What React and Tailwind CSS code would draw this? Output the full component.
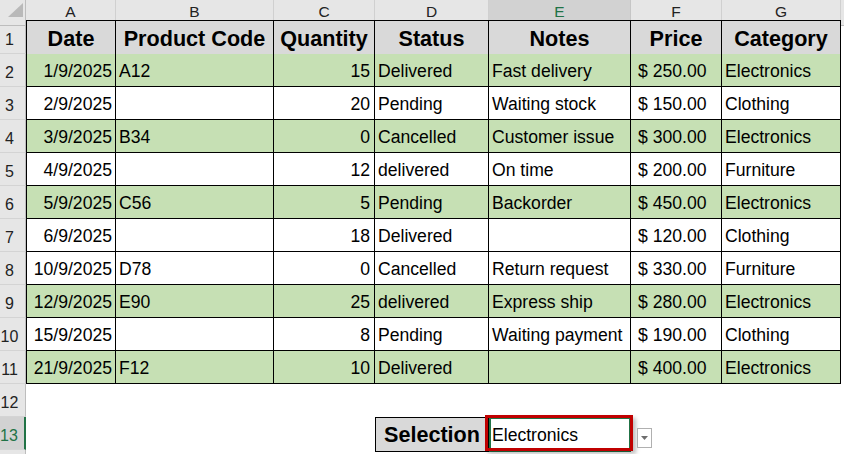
const FONT = "font-['Liberation_Sans',Arial,sans-serif]";
const COLS = 'grid grid-cols-[26px_90px_158px_101px_114px_142px_91px_119px_1fr]';

const letters = ['A', 'B', 'C', 'D', 'E', 'F', 'G'];
const headers = ['Date', 'Product Code', 'Quantity', 'Status', 'Notes', 'Price', 'Category'];

// date, code, qty, status, notes, price, category
const rows = [
  ['1/9/2025', 'A12', 15, 'Delivered', 'Fast delivery', '250.00', 'Electronics'],
  ['2/9/2025', '', 20, 'Pending', 'Waiting stock', '150.00', 'Clothing'],
  ['3/9/2025', 'B34', 0, 'Cancelled', 'Customer issue', '300.00', 'Electronics'],
  ['4/9/2025', '', 12, 'delivered', 'On time', '200.00', 'Furniture'],
  ['5/9/2025', 'C56', 5, 'Pending', 'Backorder', '450.00', 'Electronics'],
  ['6/9/2025', '', 18, 'Delivered', '', '120.00', 'Clothing'],
  ['10/9/2025', 'D78', 0, 'Cancelled', 'Return request', '330.00', 'Furniture'],
  ['12/9/2025', 'E90', 25, 'delivered', 'Express ship', '280.00', 'Electronics'],
  ['15/9/2025', '', 8, 'Pending', 'Waiting payment', '190.00', 'Clothing'],
  ['21/9/2025', 'F12', 10, 'Delivered', '', '400.00', 'Electronics'],
];

function RowHead({ n, selected, tall }) {
  return (
    <div
      className={`flex items-end justify-center pr-[6px] pb-[1px] text-[16px] border-b border-[#d4d4d4] ${
        tall ? 'h-[34px]' : 'h-[33px]'
      } ${
        selected
          ? 'bg-[#d2d2d2] text-[#217346] border-r-2 border-r-[#217346]'
          : 'bg-[#e6e6e6] text-[#222] border-r border-r-[#bdbdbd]'
      }`}
    >
      {n}
    </div>
  );
}

function ColumnHeader() {
  return (
    <div className={`${COLS} h-[20px] text-[15.5px] text-[#222]`}>
      <div className="relative bg-[#e6e6e6] border-r border-b border-[#bdbdbd]">
        <svg width="26" height="20" className="absolute inset-0">
          <polygon points="23,3 23,17 8,17" fill="#b9b9b9" />
        </svg>
      </div>
      {letters.map((l) =>
        l === 'E' ? (
          <div
            key={l}
            className="flex items-center justify-center pb-[1px] bg-[#d2d2d2] text-[#217346] border-r border-r-[#c6c6c6] border-b-2 border-b-[#217346]"
          >
            {l}
          </div>
        ) : (
          <div
            key={l}
            className="flex items-center justify-center pb-[2px] bg-[#e6e6e6] border-r border-r-[#d0d0d0] border-b border-b-[#bdbdbd]"
          >
            {l}
          </div>
        )
      )}
      <div className="bg-[#e6e6e6] border-b border-[#bdbdbd]" />
    </div>
  );
}

function HeaderRow() {
  return (
    <div className={`${COLS} h-[34px]`}>
      <RowHead n={1} tall />
      {headers.map((h, i) => (
        <div
          key={h}
          className={`flex items-center justify-center pt-[2px] bg-[#d9d9d9] border-t border-r border-b border-black text-[21.6px] font-bold text-black ${
            i === 0 ? 'border-l' : ''
          }`}
        >
          {h}
        </div>
      ))}
      <div />
    </div>
  );
}

function DataRow({ n, row }) {
  const [date, code, qty, status, notes, price, cat] = row;
  const bg = cat === 'Electronics' ? 'bg-[#c6e0b4]' : 'bg-white';
  const cell = `flex items-center pt-[2px] border-r border-b border-black whitespace-nowrap ${bg}`;
  return (
    <div className={`${COLS} h-[33px] text-[17.6px] text-black`}>
      <RowHead n={n} />
      <div className={`${cell} border-l justify-end pr-[3px]`}>{date}</div>
      <div className={`${cell} pl-[3px]`}>{code}</div>
      <div className={`${cell} justify-end pr-[4px]`}>{qty}</div>
      <div className={`${cell} pl-[3px]`}>{status}</div>
      <div className={`${cell} pl-[3px]`}>{notes}</div>
      <div className={`${cell} pl-[7px]`}>$ {price}</div>
      <div className={`${cell} pl-[3px]`}>{cat}</div>
      <div className="bg-white" />
    </div>
  );
}

function SelectionRow() {
  return (
    <div className={`${COLS} h-[33px]`}>
      <RowHead n={13} selected />
      <div />
      <div />
      <div />
      <div className="flex items-center justify-center pt-[1px] bg-[#d9d9d9] border border-black text-[21.6px] font-bold text-black">
        Selection
      </div>
      <div className="relative">
        <div className="h-full flex items-center pl-[1px] pt-[1px] border-2 border-[#217346] text-[17.6px] text-black bg-white">
          Electronics
        </div>
        {/* annotation box */}
        <div className="absolute left-[-4px] top-[-2px] w-[148px] h-[36px] border-[3px] border-[#c00000] shadow-[3px_3px_4px_rgba(0,0,0,0.25)]" />
        {/* dropdown button */}
        <div className="absolute left-[148px] top-[11px] w-[15px] h-[20px] bg-white border border-[#b0b0b0] flex items-center justify-center">
          <svg width="7" height="4" viewBox="0 0 7 4">
            <polygon points="0,0 7,0 3.5,4" fill="#6e6e6e" />
          </svg>
        </div>
      </div>
      <div />
      <div />
      <div />
    </div>
  );
}

export default function App() {
  return (
    <div className={`w-[844px] h-[454px] overflow-hidden bg-white ${FONT}`}>
      <ColumnHeader />
      <HeaderRow />
      {rows.map((r, i) => (
        <DataRow key={i} n={i + 2} row={r} />
      ))}
      <div className={`${COLS} h-[33px]`}>
        <RowHead n={12} />
      </div>
      <SelectionRow />
      <div className={`${COLS} h-[33px]`}>
        <RowHead n="" />
      </div>
    </div>
  );
}
